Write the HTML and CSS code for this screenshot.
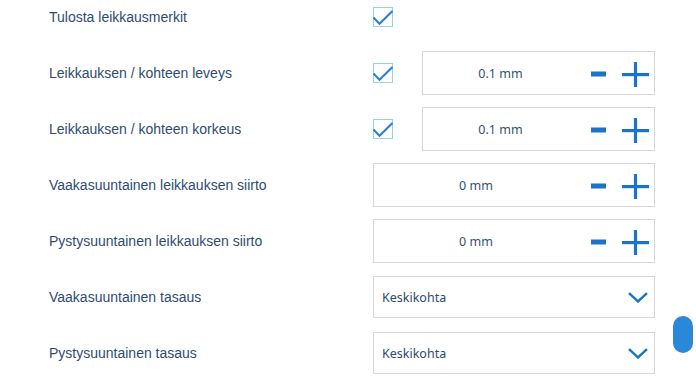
FILE: index.html
```html
<!DOCTYPE html>
<html lang="fi">
<head>
    <meta charset="UTF-8">
    <meta name="viewport" content="width=device-width, initial-scale=1.0">
    <title>Leikkausasetukset</title>
    <link rel="stylesheet" href="styles.css">
</head>
<body>
    <div class="settings">
        <div class="row">
            <span class="label">Tulosta leikkausmerkit</span>
            <div class="control">
                <span class="check"><svg width="20" height="20" viewBox="0 0 20 20"><path d="M0.5 10.5 L6.5 16.8 L19.5 4" /></svg></span>
            </div>
        </div>

        <div class="row">
            <span class="label">Leikkauksen / kohteen leveys</span>
            <div class="control">
                <span class="check"><svg width="20" height="20" viewBox="0 0 20 20"><path d="M0.5 10.5 L6.5 16.8 L19.5 4" /></svg></span>
                <div class="stepper">
                    <span class="value">0.1 mm</span>
                    <svg class="minus" width="15" height="6" viewBox="0 0 15 6"><rect x="0" y="0.5" width="15" height="5" /></svg>
                    <svg class="plus" width="27" height="25" viewBox="0 0 27 25"><rect x="0" y="11" width="27" height="3.2" /><rect x="11.9" y="0" width="3.2" height="25" /></svg>
                </div>
            </div>
        </div>

        <div class="row">
            <span class="label">Leikkauksen / kohteen korkeus</span>
            <div class="control">
                <span class="check"><svg width="20" height="20" viewBox="0 0 20 20"><path d="M0.5 10.5 L6.5 16.8 L19.5 4" /></svg></span>
                <div class="stepper">
                    <span class="value">0.1 mm</span>
                    <svg class="minus" width="15" height="6" viewBox="0 0 15 6"><rect x="0" y="0.5" width="15" height="5" /></svg>
                    <svg class="plus" width="27" height="25" viewBox="0 0 27 25"><rect x="0" y="11" width="27" height="3.2" /><rect x="11.9" y="0" width="3.2" height="25" /></svg>
                </div>
            </div>
        </div>

        <div class="row">
            <span class="label">Vaakasuuntainen leikkauksen siirto</span>
            <div class="control">
                <div class="stepper">
                    <span class="value">0 mm</span>
                    <svg class="minus" width="15" height="6" viewBox="0 0 15 6"><rect x="0" y="0.5" width="15" height="5" /></svg>
                    <svg class="plus" width="27" height="25" viewBox="0 0 27 25"><rect x="0" y="11" width="27" height="3.2" /><rect x="11.9" y="0" width="3.2" height="25" /></svg>
                </div>
            </div>
        </div>

        <div class="row">
            <span class="label">Pystysuuntainen leikkauksen siirto</span>
            <div class="control">
                <div class="stepper">
                    <span class="value">0 mm</span>
                    <svg class="minus" width="15" height="6" viewBox="0 0 15 6"><rect x="0" y="0.5" width="15" height="5" /></svg>
                    <svg class="plus" width="27" height="25" viewBox="0 0 27 25"><rect x="0" y="11" width="27" height="3.2" /><rect x="11.9" y="0" width="3.2" height="25" /></svg>
                </div>
            </div>
        </div>

        <div class="row">
            <span class="label">Vaakasuuntainen tasaus</span>
            <div class="control">
                <div class="select">
                    <span>Keskikohta</span>
                    <svg width="20" height="11" viewBox="0 0 20 11"><path d="M1 1.2 L10 9.5 L19 1.2" /></svg>
                </div>
            </div>
        </div>

        <div class="row">
            <span class="label">Pystysuuntainen tasaus</span>
            <div class="control">
                <div class="select">
                    <span>Keskikohta</span>
                    <svg width="20" height="11" viewBox="0 0 20 11"><path d="M1 1.2 L10 9.5 L19 1.2" /></svg>
                </div>
            </div>
        </div>
    </div>

    <div class="scroll-thumb"></div>
</body>
</html>
```

FILE: styles.css
```css
body {
    margin: 0;
    background: #ffffff;
    font-family: 'Liberation Sans', Arial, sans-serif;
    overflow: hidden;
    height: 380px;
}
.settings {
    margin-top: -11px; /* list is scrolled a little */
    padding-left: 49px;
}
.row {
    display: flex;
    align-items: center;
    height: 56px;
}
.label {
    width: 324px;
    font-size: 14px;
    color: #2f4c70;
}
.control {
    width: 282px;
    display: flex;
    align-items: center;
}
.check {
    width: 20px;
    height: 20px;
    box-sizing: border-box;
    border: 1.5px solid #92d5e8;
    margin-right: 29px;
    position: relative;
    flex-shrink: 0;
}
.check svg {
    position: absolute;
    left: -1.5px;
    top: -1.5px;
}
.check path {
    fill: none;
    stroke: #2a7fd3;
    stroke-width: 2;
}
.stepper {
    flex: 1;
    height: 44px;
    box-sizing: border-box;
    border: 1px solid #d7d7d7;
    display: flex;
    align-items: center;
    padding-right: 5px;
}
.value {
    flex: 1;
    margin-right: 13px;
    text-align: center;
    font-family: 'Noto Sans', 'Open Sans', sans-serif;
    font-size: 12.5px;
    color: #35506f;
}
.minus {
    fill: #1b74c9;
    margin-right: 16px;
    margin-top: 1px;
}
.plus {
    fill: #1b74c9;
    margin-top: 2px;
}
.select {
    flex: 1;
    height: 42px;
    box-sizing: border-box;
    border: 1px solid #d7d7d7;
    display: flex;
    align-items: center;
    justify-content: space-between;
    padding: 0 6px 0 8px;
    font-family: 'Noto Sans', 'Open Sans', sans-serif;
    font-size: 12.5px;
    color: #2d4a6d;
}
.select path {
    fill: none;
    stroke: #1f74c4;
    stroke-width: 2.4;
}
.scroll-thumb {
    position: absolute;
    left: 673px;
    top: 316px;
    width: 20px;
    height: 37px;
    border-radius: 10px;
    background: #2b88d9;
}
```
